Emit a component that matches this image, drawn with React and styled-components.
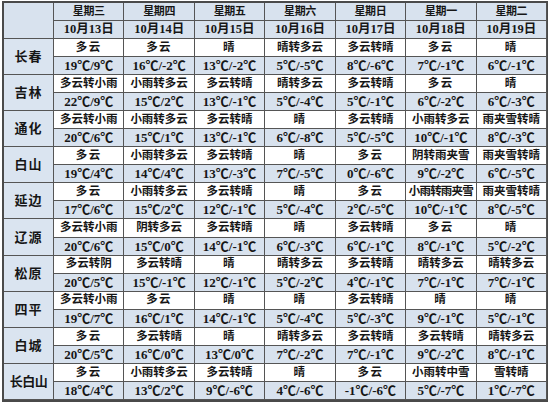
import React from "react";
import styled, { createGlobalStyle } from "styled-components";

const Global = createGlobalStyle`
  html, body { margin: 0; padding: 0; background: #ffffff; }
  body { font-family: "Liberation Serif", "Noto Sans CJK SC", serif; }
`;

const days = [
  ["星期三", "10月13日"],
  ["星期四", "10月14日"],
  ["星期五", "10月15日"],
  ["星期六", "10月16日"],
  ["星期日", "10月17日"],
  ["星期一", "10月18日"],
  ["星期二", "10月19日"],
];

const data = [
  ["长春", [["多云", "19℃/9℃"], ["多云", "16℃/-2℃"], ["晴", "13℃/-2℃"], ["晴转多云", "5℃/-5℃"], ["多云转晴", "8℃/-6℃"], ["多云", "7℃/-1℃"], ["晴", "6℃/-1℃"]]],
  ["吉林", [["多云转小雨", "22℃/9℃"], ["小雨转多云", "15℃/2℃"], ["多云转晴", "13℃/-1℃"], ["晴转多云", "5℃/-4℃"], ["多云转晴", "5℃/-1℃"], ["多云", "6℃/-2℃"], ["晴", "6℃/-3℃"]]],
  ["通化", [["多云转小雨", "20℃/6℃"], ["小雨转多云", "15℃/1℃"], ["多云转晴", "13℃/-1℃"], ["晴", "6℃/-8℃"], ["多云转晴", "5℃/-5℃"], ["小雨转多云", "10℃/-1℃"], ["雨夹雪转晴", "8℃/-3℃"]]],
  ["白山", [["多云", "19℃/4℃"], ["小雨转多云", "14℃/4℃"], ["多云转晴", "13℃/-3℃"], ["晴", "7℃/-5℃"], ["多云", "0℃/-6℃"], ["阴转雨夹雪", "9℃/-2℃"], ["雨夹雪转晴", "6℃/-5℃"]]],
  ["延边", [["多云", "17℃/6℃"], ["小雨转多云", "15℃/2℃"], ["多云转晴", "12℃/-1℃"], ["晴", "5℃/-4℃"], ["多云", "2℃/-5℃"], ["小雨转雨夹雪", "10℃/-1℃"], ["雨夹雪转晴", "8℃/-5℃"]]],
  ["辽源", [["多云转小雨", "20℃/6℃"], ["阴转多云", "15℃/0℃"], ["多云转晴", "14℃/-1℃"], ["晴", "6℃/-3℃"], ["多云转晴", "6℃/-1℃"], ["多云", "8℃/-1℃"], ["晴", "5℃/-2℃"]]],
  ["松原", [["多云转阴", "20℃/5℃"], ["多云转晴", "15℃/-1℃"], ["晴", "12℃/-1℃"], ["晴转多云", "5℃/-2℃"], ["多云转晴", "4℃/-1℃"], ["晴转多云", "7℃/-1℃"], ["晴转多云", "7℃/-1℃"]]],
  ["四平", [["多云转小雨", "19℃/7℃"], ["多云", "16℃/1℃"], ["晴", "14℃/-1℃"], ["晴", "5℃/-4℃"], ["多云转晴", "5℃/-3℃"], ["晴", "9℃/-1℃"], ["晴", "5℃/-1℃"]]],
  ["白城", [["多云", "20℃/5℃"], ["多云转晴", "16℃/0℃"], ["晴", "13℃/0℃"], ["晴转多云", "7℃/-2℃"], ["多云转晴", "7℃/-1℃"], ["多云转晴", "9℃/-2℃"], ["晴转多云", "8℃/-1℃"]]],
  ["长白山", [["多云", "18℃/4℃"], ["小雨转多云", "13℃/2℃"], ["多云转晴", "9℃/-6℃"], ["晴", "4℃/-6℃"], ["多云", "-1℃/-6℃"], ["小雨转中雪", "5℃/-7℃"], ["雪转晴", "1℃/-7℃"]]],
];

const Page = styled.div`
  padding: 1px 2px 0 2px;
`;

const Grid = styled.div`
  width: 546px;
  height: 401px;
  box-sizing: border-box;
  display: grid;
  grid-template-columns: 50px repeat(7, 1fr);
  grid-template-rows: 18px 18px repeat(20, 1fr);
  border: 2px solid #4a4a4a;
  border-right-width: 1px;
  background: #ffffff;
`;

const Cell = styled.div`
  display: flex;
  align-items: center;
  justify-content: center;
  border-right: 1px solid #555;
  border-bottom: 1px solid #555;
  background: ${(p) => (p.$shaded ? "#d8e2ee" : "#ffffff")};
  color: #161616;
  font-weight: bold;
  font-size: ${(p) => p.$size || 12}px;
  letter-spacing: ${(p) => p.$spacing || 0}px;
  white-space: nowrap;
  overflow: hidden;
  line-height: 1;
`;

const Corner = styled(Cell)`
  grid-row: span 2;
  background: #d8e2ee;
`;

const City = styled(Cell)`
  grid-row: span 2;
  background: #dae4f0;
  font-size: 13px;
  letter-spacing: ${(p) => (p.$long ? -0.5 : 1)}px;
`;

const Temp = styled(Cell)`
  background: #d8e2ee;
  font-size: 13px;
`;

const spacingFor = (w) => (w.length > 5 ? -0.8 : w.length <= 2 ? 1.5 : 0);

export default function App() {
  return (
    <Page>
      <Global />
      <Grid>
        <Corner />
        {days.map(([d]) => (
          <Cell key={d} $shaded $size={11} $spacing={-0.4}>{d}</Cell>
        ))}
        {days.map(([d, date]) => (
          <Cell key={date} $shaded $size={12.5}>{date}</Cell>
        ))}
        {data.map(([city, cells]) => (
          <React.Fragment key={city}>
            <City $long={city.length > 2}>{city}</City>
            {cells.map(([w], i) => (
              <Cell key={"w" + i} $size={11.5} $spacing={spacingFor(w)}>
                {w}
              </Cell>
            ))}
            {cells.map(([, t], i) => (
              <Temp key={"t" + i}>{t}</Temp>
            ))}
          </React.Fragment>
        ))}
      </Grid>
    </Page>
  );
}
